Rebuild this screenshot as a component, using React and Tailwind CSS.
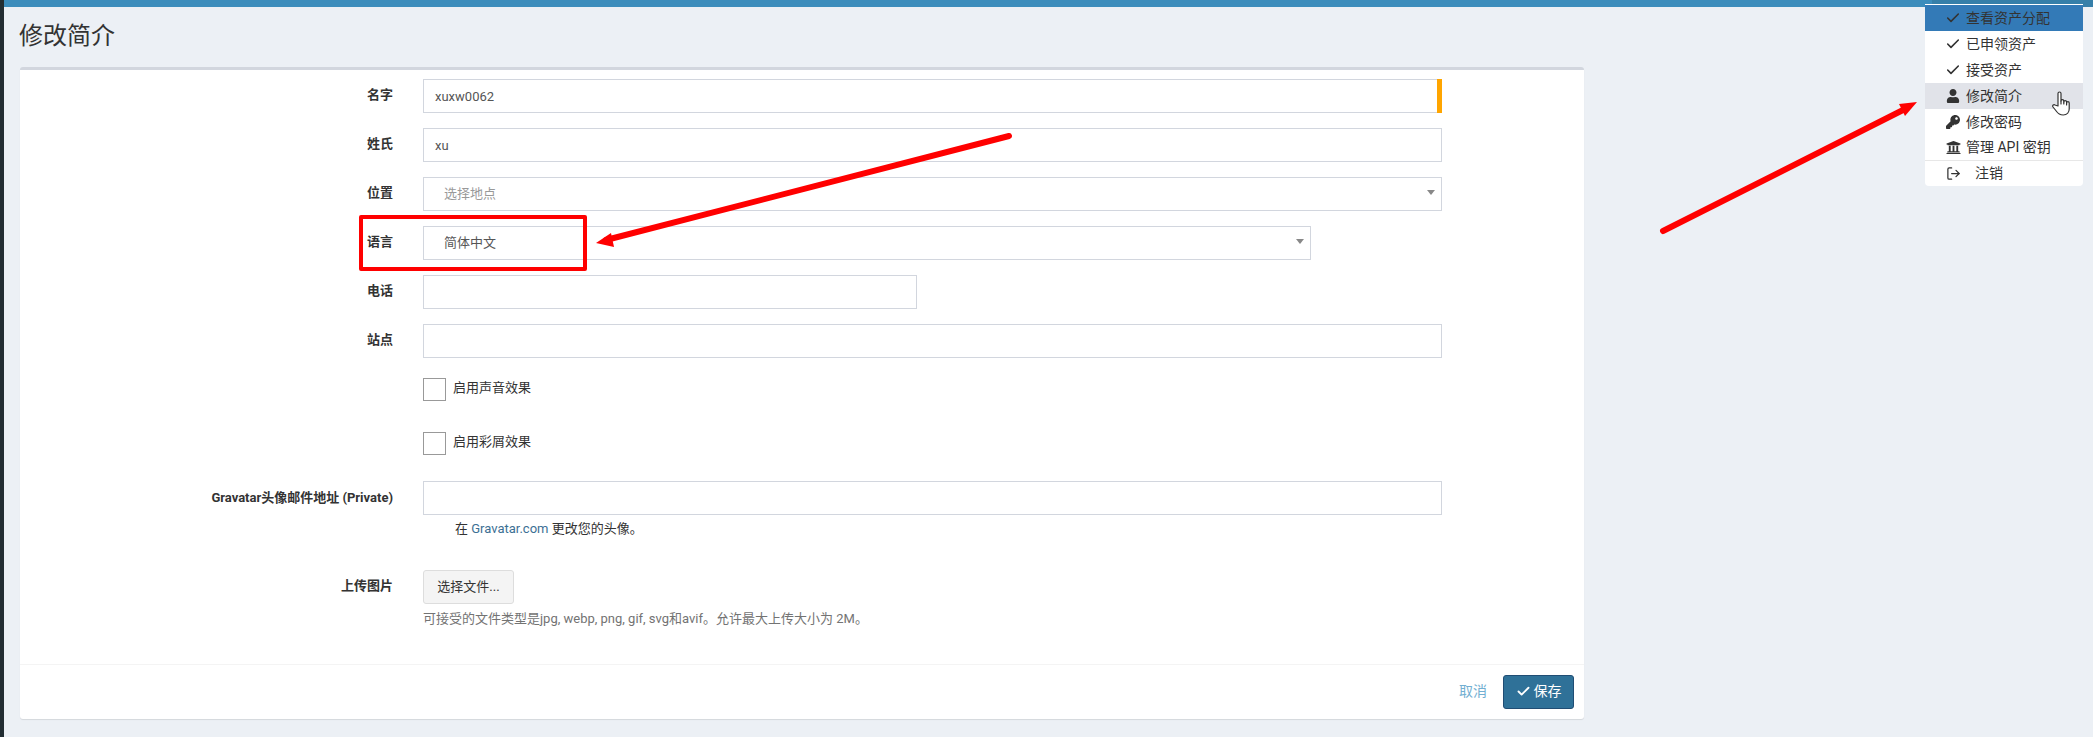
import React from "react";
import { Check, LogOut } from "lucide-react";
import { FaUser, FaKey, FaUniversity } from "react-icons/fa";

const font = "font-['Roboto','Noto_Sans_CJK_SC',sans-serif]";

function Label({ children }) {
  return <div className="w-[373px] shrink-0 pt-[7px] text-right text-[13px] leading-[18px] font-bold text-[#333]">{children}</div>;
}

function Field({ label, width, value, placeholder, select, flag }) {
  return (
    <div className="mb-[15px] flex gap-[30px]">
      <Label>{label}</Label>
      <div className={`${width} relative flex h-[34px] items-center border border-[#d2d6de] bg-white text-[13px] text-[#555] ${select ? "pl-[20px]" : "pt-[1px] pl-[11px]"}`}>
        <span className={placeholder ? "text-[#999]" : ""}>{value}</span>
        {flag && <span className="absolute -top-px -right-px -bottom-px w-[5px] bg-[#ffa500]" />}
        {select && <span className="absolute top-[12px] right-[6px] h-0 w-0 border-x-[4px] border-t-[5px] border-x-transparent border-t-[#888]" />}
      </div>
    </div>
  );
}

function Check2({ label, mb }) {
  return (
    <div className={`${mb} flex pl-[403px]`}>
      <span className="h-[23px] w-[23px] border border-[#999] bg-white" />
      <span className="mt-[1px] ml-[7px] text-[13px] leading-[18px] text-[#333]">{label}</span>
    </div>
  );
}

function MenuItem({ icon, children, cls = "", h = "h-[26px]" }) {
  return (
    <div className={`flex ${h} items-center text-[14px] text-[#333] ${cls}`}>
      <span className="flex w-[41px] shrink-0 justify-center pl-[15px] text-[#333]">{icon}</span>
      <span className="whitespace-pre">{children}</span>
    </div>
  );
}

export default function App() {
  const chk = <Check size={16} strokeWidth={2.4} />;
  return (
    <div className={`${font} relative flex h-[737px] w-[2093px] overflow-hidden bg-[#ecf0f5]`}>
      <div className="w-[4px] shrink-0 bg-[#222d32]" />
      <div className="min-w-0 flex-1">
        <div className="flex h-[7px]">
          <div className="w-[1928px] bg-[#3c8dbc]" />
          <div className="flex-1 bg-[#367fa9]" />
        </div>
        <div className="flex h-[60px] items-center pb-[2px] pl-[15px] text-[24px] leading-none text-[#333]">修改简介</div>
        <div className="ml-[16px] h-[652px] w-[1564px] rounded-[3px] border-t-[3px] border-[#d2d6de] bg-white shadow-[0_1px_1px_rgba(0,0,0,0.1)]">
          <div className="h-[595px] border-b border-[#f4f4f4] pt-[9px]">
            <Field label="名字" width="w-[1019px]" value="xuxw0062" flag />
            <Field label="姓氏" width="w-[1019px]" value="xu" />
            <Field label="位置" width="w-[1019px]" value="选择地点" placeholder select />
            <Field label="语言" width="w-[888px]" value="简体中文" select />
            <Field label="电话" width="w-[494px]" />
            <Field label="站点" width="w-[1019px]" />
            <div className="pt-[5px]">
              <Check2 label="启用声音效果" mb="mb-[31px]" />
              <Check2 label="启用彩屑效果" mb="mb-[26px]" />
            </div>
            <div className="flex gap-[30px]">
              <Label>
                <span className="relative top-[1px]">Gravatar头像邮件地址 (Private)</span>
              </Label>
              <div className="h-[34px] w-[1019px] border border-[#d2d6de]" />
            </div>
            <div className="mt-[5px] pl-[435px] text-[13px] leading-[18px] text-[#333]">
              在 <span className="text-[#3c6f94]">Gravatar.com</span> 更改您的头像。
            </div>
            <div className="mt-[32px] flex gap-[30px]">
              <Label>上传图片</Label>
              <div>
                <div className="flex h-[34px] w-[91px] items-center justify-center rounded-[3px] border border-[#ddd] bg-[#f4f4f4] text-[13px] text-[#333]">选择文件...</div>
                <div className="mt-[6px] text-[13px] leading-[18px] text-[#737373]">可接受的文件类型是jpg, webp, png, gif, svg和avif。允许最大上传大小为 2M。</div>
              </div>
            </div>
          </div>
          <div className="flex h-[53px] items-center justify-end gap-[16px] pr-[10px]">
            <span className="text-[14px] text-[#72afd2]">取消</span>
            <div className="flex h-[34px] w-[71px] items-center justify-center gap-[3px] rounded-[3px] border border-[#204d74] bg-[#2f7198] text-[14px] text-white">
              <Check size={15} strokeWidth={3} />
              保存
            </div>
          </div>
        </div>
      </div>

      {/* dropdown menu overlay */}
      <div className="absolute top-[4px] left-[1925px] w-[158px] overflow-hidden rounded-b-[4px] border-t border-white bg-white">
        <MenuItem icon={chk} cls="bg-[#337ab7]">查看资产分配</MenuItem>
        <MenuItem icon={chk}>已申领资产</MenuItem>
        <MenuItem icon={chk}>接受资产</MenuItem>
        <MenuItem icon={<FaUser size={14} />} cls="bg-[#e1e3e9]">修改简介</MenuItem>
        <MenuItem icon={<FaKey size={14} />}>修改密码</MenuItem>
        <MenuItem icon={<FaUniversity size={15} />} h="h-[25px]">管理 API 密钥</MenuItem>
        <div className="h-px bg-[#e7e7e7]" />
        <MenuItem icon={<LogOut size={15} />} h="h-[25px]"><span className="pl-[9px]">注销</span></MenuItem>
      </div>
      <svg className="absolute top-[91px] left-[2052px]" width="18" height="25" viewBox="0 0 18 25" fill="#fff" stroke="#333" strokeWidth="1.2" strokeLinejoin="round" strokeLinecap="round">
        <path d="M6 15 V2.5 a1.5 1.5 0 0 1 3 0 V10 a1.4 1.4 0 0 1 2.8 0 V11 a1.4 1.4 0 0 1 2.8 0 V12 a1.3 1.3 0 0 1 2.6 0 V18 c0 3 -2 6 -6 6 c-3 0 -5 -1 -7 -4 L1 16 c-1 -1.5 .8 -3 2 -2 Z" />
        <path d="M9 10 V13 M11.8 11 V13 M14.6 12 V14" fill="none" />
      </svg>

      {/* annotations */}
      <div className="absolute top-[215px] left-[359px] h-[56px] w-[228px] rounded-[2px] border-[4px] border-[#ff0000]" />
      <svg className="absolute inset-0" width="2093" height="737" viewBox="0 0 2093 737" fill="none">
        <path d="M1009 136 L606 240" stroke="#f00" strokeWidth="6" strokeLinecap="round" />
        <path d="M596 243 L611 233 L614 247 Z" fill="#f00" />
        <path d="M1663 231 L1905 109" stroke="#f00" strokeWidth="6" strokeLinecap="round" />
        <path d="M1917 102 L1899 104 L1905 116 Z" fill="#f00" />
      </svg>
    </div>
  );
}
